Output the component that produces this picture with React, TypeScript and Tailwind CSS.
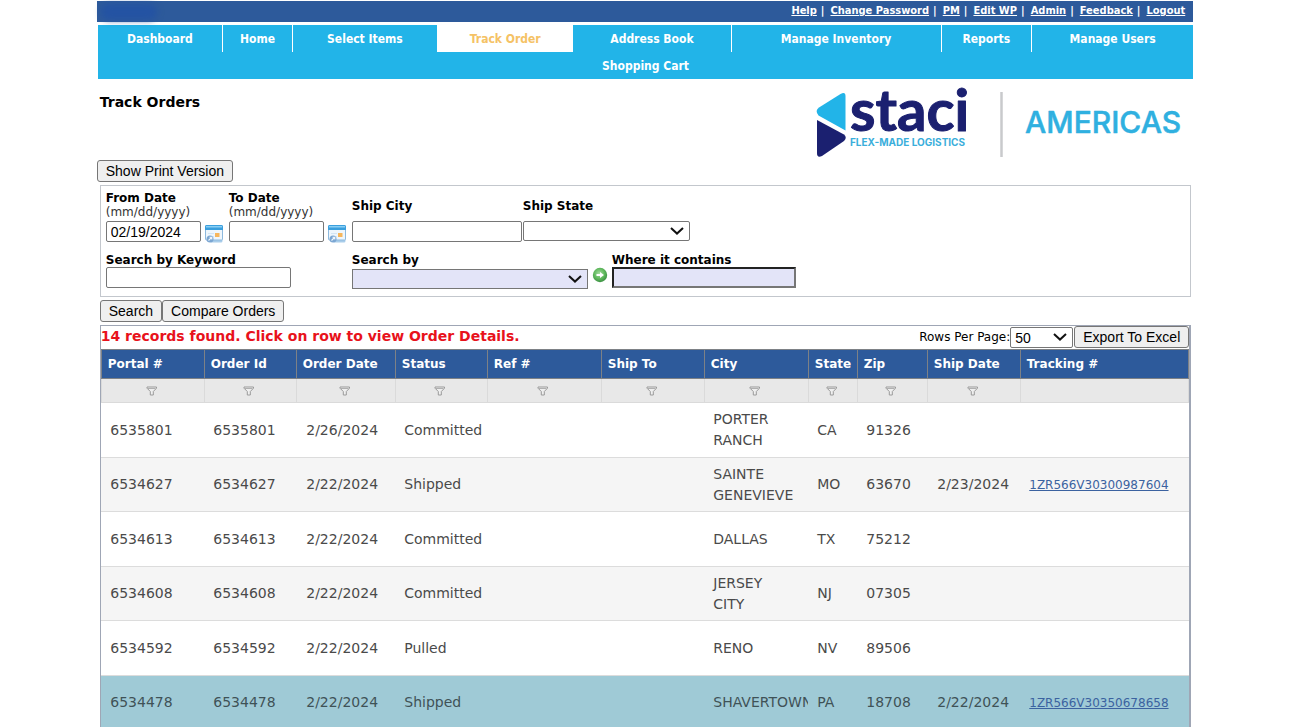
import type { ReactNode } from "react";

const topLinks = ["Help", "Change Password", "PM", "Edit WP", "Admin", "Feedback", "Logout"];

const tabs = [
  { label: "Dashboard", grow: "grow-[125]" },
  { label: "Home", grow: "grow-[69]" },
  { label: "Select Items", grow: "grow-[145]" },
  { label: "Track Order", grow: "grow-[137]", active: true },
  { label: "Address Book", grow: "grow-[158]" },
  { label: "Manage Inventory", grow: "grow-[210]" },
  { label: "Reports", grow: "grow-[90]" },
  { label: "Manage Users", grow: "grow-[162]" },
];

const columns = [
  { name: "Portal #", width: "w-[103px]" },
  { name: "Order Id", width: "w-[92px]" },
  { name: "Order Date", width: "w-[99px]" },
  { name: "Status", width: "w-[92px]" },
  { name: "Ref #", width: "w-[114px]" },
  { name: "Ship To", width: "w-[103px]" },
  { name: "City", width: "w-[104px]" },
  { name: "State", width: "w-[49px]" },
  { name: "Zip", width: "w-[70px]" },
  { name: "Ship Date", width: "w-[93px]" },
  { name: "Tracking #", width: "" },
];

const orders = [
  { id: "6535801", date: "2/26/2024", status: "Committed", city: "PORTER RANCH", state: "CA", zip: "91326", ship: "", tracking: "" },
  { id: "6534627", date: "2/22/2024", status: "Shipped", city: "SAINTE GENEVIEVE", state: "MO", zip: "63670", ship: "2/23/2024", tracking: "1ZR566V30300987604" },
  { id: "6534613", date: "2/22/2024", status: "Committed", city: "DALLAS", state: "TX", zip: "75212", ship: "", tracking: "" },
  { id: "6534608", date: "2/22/2024", status: "Committed", city: "JERSEY CITY", state: "NJ", zip: "07305", ship: "", tracking: "" },
  { id: "6534592", date: "2/22/2024", status: "Pulled", city: "RENO", state: "NV", zip: "89506", ship: "", tracking: "" },
  { id: "6534478", date: "2/22/2024", status: "Shipped", city: "SHAVERTOWN", state: "PA", zip: "18708", ship: "2/22/2024", tracking: "1ZR566V30350678658", selected: true },
];

const sans = "font-['DejaVu_Sans',Verdana,sans-serif]";
const condensed = "font-['DejaVu_Sans_Condensed','DejaVu_Sans',sans-serif]";
const field = "block rounded-[2px] border border-[#767676] bg-white px-1 font-['Liberation_Sans',sans-serif] text-sm text-black";

function Button({ children }: { children: ReactNode }) {
  return (
    <button
      type="button"
      className="h-[22px] rounded-[3px] border border-[#767676] bg-[#efefef] px-2 font-['Liberation_Sans',sans-serif] text-sm leading-5 whitespace-nowrap text-black"
    >
      {children}
    </button>
  );
}

function Chevron() {
  return (
    <svg viewBox="0 0 14 8" className="pointer-events-none absolute top-1/2 right-1.5 h-2 w-3.5 -translate-y-1/2" aria-hidden="true">
      <path d="M1 1l6 5.6L13 1" fill="none" stroke="#111" strokeWidth="2" />
    </svg>
  );
}

function CalendarIcon() {
  return (
    <svg viewBox="0 0 18 18" className="size-[18px]" aria-hidden="true">
      <path d="M2 15h14l1.500-1V16q0 1.500-1.500 1.500H6z" fill="#a9cdea" />
      <rect x="0.5" y="0.5" width="17" height="14.500" rx="1" fill="#eef6fc" stroke="#8db9de" />
      <path d="M0 1.5Q0 0 1.5 0h15Q18 0 18 1.5V5H0z" fill="#3a9fdd" />
      <path d="M1 1h16v1.500H1z" fill="#8acff4" />
      <path d="M3 8.500h6M4 11.500h5" stroke="#d3e5f4" />
      <rect x="10" y="8" width="4.500" height="4" fill="#f6b65c" />
      <circle cx="5" cy="14" r="3.500" fill="#7ba6d2" />
      <path d="M3.500 15.500l3-3M4.500 12.200h2.300v2.300" fill="none" stroke="#f0f6fc" strokeWidth="1.1" />
    </svg>
  );
}

function GoIcon() {
  return (
    <svg viewBox="0 0 16 16" className="size-4" aria-hidden="true">
      <defs>
        <radialGradient id="go" cx="45%" cy="40%" r="60%">
          <stop offset="0" stopColor="#a5dca0" />
          <stop offset="0.6" stopColor="#5fb85c" />
          <stop offset="1" stopColor="#3c9144" />
        </radialGradient>
      </defs>
      <circle cx="8" cy="8" r="7.2" fill="url(#go)" />
      <path d="M4.500 7h3.500V5l4 3-4 3V9H4.500z" fill="#fff" />
    </svg>
  );
}

function FilterIcon() {
  return (
    <svg viewBox="0 0 12 10" className="mx-auto h-2.5 w-3" aria-hidden="true">
      <path d="M1 1h9.500v1.200L7.300 5.500v3.500H4.300V5.500L1 2.200z" fill="#efefef" stroke="#9a9a9a" />
      <path d="M2 2.500h7.500" stroke="#b0b0b0" />
    </svg>
  );
}

function Logo() {
  return (
    <svg viewBox="0 0 366 68" className="h-[68px] w-[366px] overflow-visible" role="img" aria-label="Staci Americas, flex-made logistics">
      <path d="M4 16.500L25.500 3Q30.500 0.500 30.500 5V39.500L3.500 24.500Q-0.500 19.500 4 16.500z" fill="#22b4e8" />
      <path d="M2 29L29 43.500Q32.500 46.500 29 50L7 65Q2 67.500 2 62z" fill="#1b2070" />
      <text x="35" y="40" fill="#1b2070" stroke="#1b2070" strokeWidth="1" strokeLinejoin="round" className="font-['Lato',sans-serif] text-[58px] font-bold">staci</text>
      <text x="35" y="55" fill="#3aaedb" className="font-['Inter',sans-serif] text-[10px] font-bold">FLEX-MADE LOGISTICS</text>
      <path d="M186.500 1v65" stroke="#c9cacc" strokeWidth="2.500" />
      <text x="210" y="42" fill="#2fb0e0" stroke="#2fb0e0" strokeWidth=".5" strokeLinejoin="round" className="font-['Inter',sans-serif] text-[30px] font-medium">AMERICAS</text>
    </svg>
  );
}

function DateField({ id, label, value }: { id: string; label: string; value: string }) {
  return (
    <div className="w-[123px]">
      <label htmlFor={id} className="block text-xs leading-[14px] font-bold">
        {label}
        <span className="block font-normal text-[#333]">(mm/dd/yyyy)</span>
      </label>
      <div className="mt-0.5 flex gap-1">
        <input id={id} defaultValue={value} className={`${field} h-[21px] w-[95px]`} />
        <button type="button" aria-label={`Pick ${label}`} className="mt-1 h-[18px]">
          <CalendarIcon />
        </button>
      </div>
    </div>
  );
}

export default function App() {
  return (
    <div className={`h-screen overflow-y-auto bg-white text-black [scrollbar-width:none] ${sans}`}>
      <div className="mx-auto w-[85%] pt-px">
        <div className={`flex h-[21px] items-center justify-between bg-[#2d5a9b] pr-2 pl-1 text-[11px] font-bold text-white ${condensed}`}>
          <div className="h-4 w-14 rounded-full bg-[#2453a3] blur-[3px]" />
          <div className="flex">
            {topLinks.map((link, i) => (
              <span key={link} className="flex">
                {i > 0 && <span className="pr-1.5 pl-1">|</span>}
                <a href="#" className="underline">{link}</a>
              </span>
            ))}
          </div>
        </div>

        <nav className={`mt-[3px] ml-px bg-[#22b4e8] text-xs font-bold text-white ${condensed}`}>
          <div className="flex h-[27px]">
            {tabs.map((tab, i) => (
              <a
                key={tab.label}
                href="#"
                className={`flex basis-0 items-center justify-center whitespace-nowrap ${tab.grow} ${
                  tab.active ? "bg-white text-[#f5c265]" : i < tabs.length - 1 && i !== 2 ? "border-r border-white" : ""
                }`}
              >
                {tab.label}
              </a>
            ))}
          </div>
          <a href="#" className="flex h-[27px] items-center justify-center">Shopping Cart</a>
        </nav>

        <header className="flex h-20 justify-between pt-3 pr-3 pl-[3px]">
          <h1 className="text-sm leading-[22px] font-bold">Track Orders</h1>
          <Logo />
        </header>

        <Button>Show Print Version</Button>

        <form className="mt-0.5 mr-0.5 ml-[3px] h-28 border border-[#c3c7cd] px-[5px] pt-[5px]" onSubmit={(e) => e.preventDefault()}>
          <div className="flex h-[62px]">
            <DateField id="from" label="From Date" value="02/19/2024" />
            <DateField id="to" label="To Date" value="" />
            <div className="w-[171px] pt-2">
              <label htmlFor="city" className="block text-xs leading-[14px] font-bold">Ship City</label>
              <input id="city" className={`${field} mt-2 h-[21px] w-[170px]`} />
            </div>
            <div className="pt-2">
              <label htmlFor="state" className="block text-xs leading-[14px] font-bold">Ship State</label>
              <div className="relative mt-2">
                <select id="state" className={`${field} h-5 w-[167px] appearance-none`} />
                <Chevron />
              </div>
            </div>
          </div>
          <div className="flex">
            <div className="w-[246px]">
              <label htmlFor="keyword" className="block text-xs leading-[14px] font-bold">Search by Keyword</label>
              <input id="keyword" className={`${field} h-[21px] w-[185px]`} />
            </div>
            <div>
              <label htmlFor="by" className="block text-xs leading-[14px] font-bold">Search by</label>
              <div className="relative mt-0.5">
                <select id="by" className="block h-5 w-[236px] appearance-none border border-[#767676] bg-[#e3e4f8]" />
                <Chevron />
              </div>
            </div>
            <button type="button" aria-label="Go" className="mx-1 mt-3.5 size-4">
              <GoIcon />
            </button>
            <div>
              <label htmlFor="contains" className="block text-xs leading-[14px] font-bold">Where it contains</label>
              <input id="contains" className="block h-[21px] w-[184px] border-2 border-t-[#222] border-r-[#767676] border-b-[#767676] border-l-[#222] bg-[#e3e4f8] px-1 text-sm" />
            </div>
          </div>
        </form>

        <div className="mt-[3px] ml-[3px] flex">
          <Button>Search</Button>
          <Button>Compare Orders</Button>
        </div>

        <section className="mt-[3px] mr-0.5 ml-[3px] border border-r-2 border-[#9fa6b5]">
          <div className="flex h-[23px] items-start justify-between">
            <p className="text-sm leading-5 font-bold text-[#e8121b]">14 records found. Click on row to view Order Details.</p>
            <div className="flex items-center">
              <label htmlFor="rows" className="text-xs">Rows Per Page:</label>
              <div className="relative mr-px">
                <select id="rows" className={`${field} h-[21px] w-[63px] appearance-none`}>
                  <option>50</option>
                </select>
                <Chevron />
              </div>
              <Button>Export To Excel</Button>
            </div>
          </div>

          <table className="w-full table-fixed border-collapse text-left">
            <colgroup>
              {columns.map((c) => (
                <col key={c.name} className={c.width} />
              ))}
            </colgroup>
            <thead>
              <tr className="h-[29px] bg-[#2d5a9b] text-xs text-white">
                {columns.map((c) => (
                  <th key={c.name} scope="col" className="border border-[#7d8186] pl-1.5 whitespace-nowrap">{c.name}</th>
                ))}
              </tr>
              <tr className="h-6 bg-[#e8e8e8]">
                {columns.map((c, i) => (
                  <td key={c.name} className="border border-[#dadada]">
                    {i < columns.length - 1 && (
                      <button type="button" aria-label={`Filter ${c.name}`} className="block w-full pr-0.5">
                        <FilterIcon />
                      </button>
                    )}
                  </td>
                ))}
              </tr>
            </thead>
            <tbody>
              {orders.map((o) => (
                <tr
                  key={o.id}
                  className={`h-[55px] border-b border-[#dcdcdc] text-sm leading-[21px] even:h-[54px] ${
                    o.selected ? "bg-[#9fcad6] text-[#3f5257]" : "text-[#4a4a4a] even:bg-[#f5f5f5]"
                  }`}
                >
                  <td className="pl-[9px]">{o.id}</td>
                  <td className="pl-[9px]">{o.id}</td>
                  <td className="pl-2.5">{o.date}</td>
                  <td className="pl-[9px]">{o.status}</td>
                  <td />
                  <td />
                  <td className="overflow-hidden pr-3 pl-[9px]">{o.city}</td>
                  <td className="pl-[9px]">{o.state}</td>
                  <td className="pl-[9px]">{o.zip}</td>
                  <td className="pl-2.5">{o.ship}</td>
                  <td className="pl-[9px] text-xs">
                    <a href="#" className="text-[#3b62a0] underline">{o.tracking}</a>
                  </td>
                </tr>
              ))}
            </tbody>
          </table>
        </section>
      </div>
    </div>
  );
}
